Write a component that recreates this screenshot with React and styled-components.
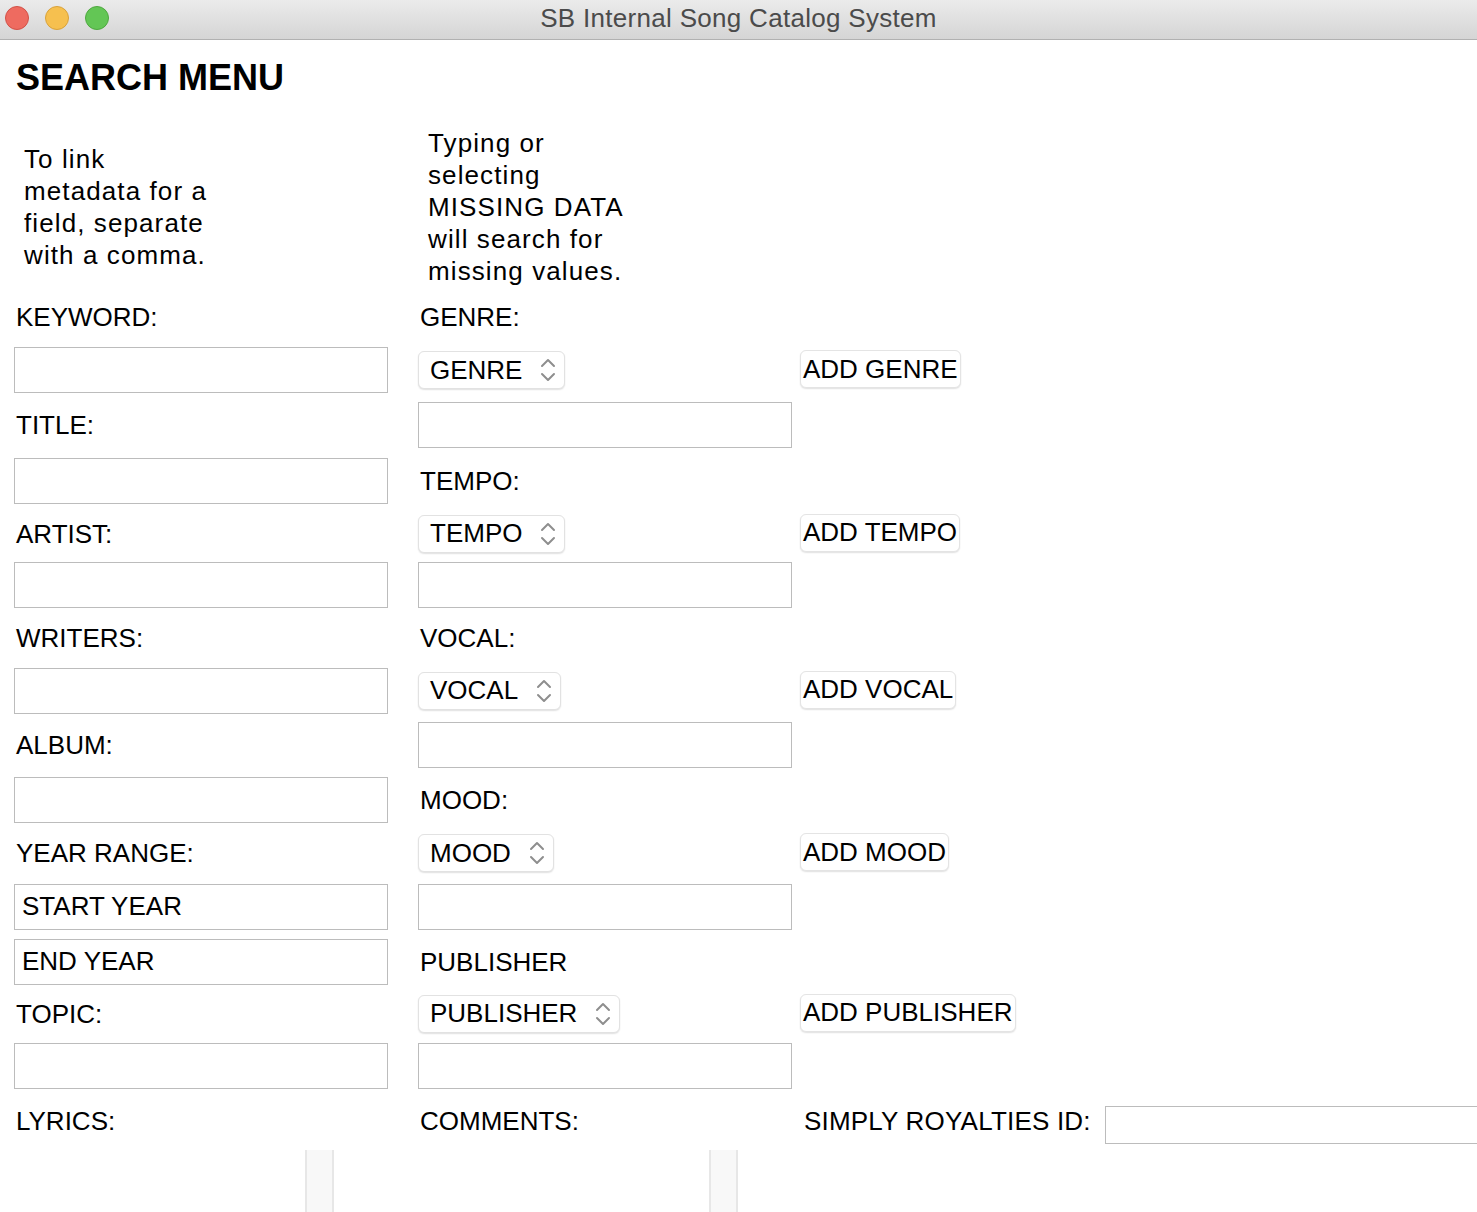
import React from "react";
import styled, { createGlobalStyle } from "styled-components";

const GlobalStyle = createGlobalStyle`
  html, body { margin: 0; padding: 0; background: #ffffff; overflow: hidden; }
  body { font-family: "Liberation Sans", Arial, sans-serif; color: #000; }
  * { box-sizing: border-box; }
`;

const Window = styled.div`
  width: 1477px;
  height: 1212px;
  background: #fff;
  overflow: hidden;
  display: flex;
  flex-direction: column;
`;

const TitleBar = styled.div`
  flex: 0 0 40px;
  display: grid;
  grid-template-columns: 1fr auto 1fr;
  align-items: center;
  background: linear-gradient(#ebebeb, #d5d5d5);
  border-bottom: 1px solid #b1b1b1;
`;

const Lights = styled.div`
  display: flex;
  gap: 16px;
  padding-left: 5px;
  margin-top: -3px;
`;

const Light = styled.span`
  width: 24px;
  height: 24px;
  border-radius: 50%;
  background: ${(p) => p.$fill};
  border: 1px solid ${(p) => p.$edge};
`;

const WindowTitle = styled.div`
  font-size: 26px;
  color: #4b4b4b;
  letter-spacing: 0.3px;
  margin-top: -2px;
`;

const Heading = styled.h1`
  margin: 17px 0 0 16px;
  font-size: 36px;
  line-height: 42px;
  font-weight: 700;
`;

const Form = styled.div`
  flex: 1;
  margin-top: 24px;
  padding-left: 14px;
  display: grid;
  grid-template-columns: 404px 382px 1fr;
  grid-template-rows: 168px 52px 54px 56px 55px 51px 52px 53px 53px 56px 54px 52px 55px 55px 49px 56px 54px 1fr;
  align-items: center;
  justify-items: start;
`;

const Note = styled.div`
  padding-left: 10px;
  font-size: 26px;
  line-height: 32px;
  letter-spacing: 1.1px;
`;

const Label = styled.div`
  padding-left: 2px;
  font-size: 26px;
  line-height: 32px;
  white-space: nowrap;
  letter-spacing: ${(p) => p.$ls || 0}px;
`;

const TextInput = styled.input`
  width: ${(p) => p.$w || 374}px;
  height: ${(p) => p.$h || 46}px;
  border: 1px solid #bcbcbc;
  background: #fff;
  padding: 0 7px;
  font-family: "Liberation Sans", Arial, sans-serif;
  font-size: 26px;
  color: #000;
  outline: none;
  margin-top: ${(p) => p.$dy || 0}px;
  flex-shrink: 0;
`;

const Select = styled.div`
  display: inline-flex;
  align-items: center;
  height: 38px;
  padding: 0 8px 0 11px;
  gap: 18px;
  border-radius: 6px;
  background: #fff;
  border: 1px solid #e2e2e2;
  box-shadow: 0 1px 1.5px rgba(0, 0, 0, 0.12);
  font-size: 26px;
  white-space: nowrap;
`;

const Button = styled.div`
  display: inline-flex;
  align-items: center;
  height: 38px;
  padding: 0 2px;
  border-radius: 6px;
  background: #fff;
  border: 1px solid #e4e4e4;
  box-shadow: 0 1px 1.5px rgba(0, 0, 0, 0.12);
  font-size: 26px;
  white-space: nowrap;
  margin-top: -2px;
`;

const IdField = styled.div`
  display: flex;
  align-items: center;
  gap: 14px;
  padding-left: 2px;
`;

const Scroller = styled.div`
  align-self: stretch;
  margin-top: 2px;
  width: 320px;
  display: flex;
  justify-content: flex-end;
`;

const ScrollTrack = styled.div`
  width: 29px;
  height: 100%;
  background: #f8f8f8;
  border-left: 2px solid #e7e7e7;
  border-right: 2px solid #e7e7e7;
`;

const Chevrons = () => (
  <svg width="16" height="26" viewBox="0 0 16 26" fill="none" stroke="#8e8e8e" strokeWidth="2" strokeLinecap="round" strokeLinejoin="round">
    <path d="M2 9 L8 3 L14 9" />
    <path d="M2 17 L8 23 L14 17" />
  </svg>
);

const Note1 = ["To link", "metadata for a", "field, separate", "with a comma."];
const Note2 = ["Typing or", "selecting", "MISSING DATA", "will search for", "missing values."];

const lines = (arr) => arr.map((l, i) => (
  <React.Fragment key={i}>
    {l}
    {i < arr.length - 1 && <br />}
  </React.Fragment>
));

export default function App() {
  return (
    <>
      <GlobalStyle />
      <Window>
        <TitleBar>
          <Lights>
            <Light $fill="#ee6b60" $edge="#d25147" />
            <Light $fill="#f6c04f" $edge="#d9a23a" />
            <Light $fill="#63c655" $edge="#4ea83f" />
          </Lights>
          <WindowTitle>SB Internal Song Catalog System</WindowTitle>
          <div />
        </TitleBar>
        <Heading>SEARCH MENU</Heading>
        <Form>
          <Note>{lines(Note1)}</Note>
          <Note>{lines(Note2)}</Note>
          <div />

          <Label>KEYWORD:</Label>
          <Label>GENRE:</Label>
          <div />

          <TextInput />
          <Select>GENRE<Chevrons /></Select>
          <Button>ADD GENRE</Button>

          <Label>TITLE:</Label>
          <TextInput />
          <div />

          <TextInput />
          <Label>TEMPO:</Label>
          <div />

          <Label>ARTIST:</Label>
          <Select>TEMPO<Chevrons /></Select>
          <Button>ADD TEMPO</Button>

          <TextInput />
          <TextInput />
          <div />

          <Label>WRITERS:</Label>
          <Label>VOCAL:</Label>
          <div />

          <TextInput />
          <Select>VOCAL<Chevrons /></Select>
          <Button>ADD VOCAL</Button>

          <Label>ALBUM:</Label>
          <TextInput />
          <div />

          <TextInput />
          <Label>MOOD:</Label>
          <div />

          <Label>YEAR RANGE:</Label>
          <Select>MOOD<Chevrons /></Select>
          <Button>ADD MOOD</Button>

          <TextInput defaultValue="START YEAR" />
          <TextInput />
          <div />

          <TextInput defaultValue="END YEAR" />
          <Label>PUBLISHER</Label>
          <div />

          <Label>TOPIC:</Label>
          <Select>PUBLISHER<Chevrons /></Select>
          <Button>ADD PUBLISHER</Button>

          <TextInput />
          <TextInput />
          <div />

          <Label>LYRICS:</Label>
          <Label>COMMENTS:</Label>
          <IdField>
            <Label $ls={0.2}>SIMPLY ROYALTIES ID:</Label>
            <TextInput $w={420} $h={38} $dy={8} />
          </IdField>

          <Scroller><ScrollTrack /></Scroller>
          <Scroller><ScrollTrack /></Scroller>
          <div />
        </Form>
      </Window>
    </>
  );
}
